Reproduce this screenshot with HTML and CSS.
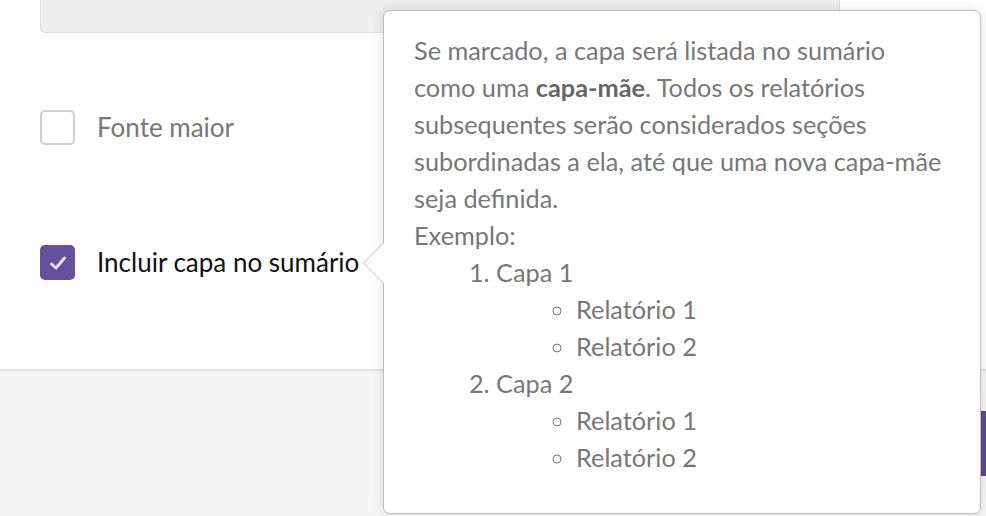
FILE: index.html
```html
<!DOCTYPE html>
<html lang="pt-BR">
    <head>
        <meta charset="UTF-8">
        <title>Opções da capa</title>
        <link rel="stylesheet" href="styles.css">
    </head>
    <body>
        <div class="modal">
            <div class="modal-body">
                <div class="field-box"></div>

                <label class="check-row">
                    <span class="check"></span>
                    <span class="check-label">Fonte maior</span>
                </label>

                <label class="check-row checked">
                    <span class="check">
                        <svg width="18" height="16" viewBox="0 0 18 16">
                            <path d="M2.5 9 L7 13 L15.5 3" fill="none" stroke="#e4e0ee" stroke-width="3" stroke-linecap="round" stroke-linejoin="round"/>
                        </svg>
                    </span>
                    <span class="check-label">Incluir capa no sumário</span>
                </label>
            </div>

            <div class="modal-footer">
                <button class="btn-primary" aria-label="Salvar"></button>
            </div>
        </div>

        <!-- popover do item "Incluir capa no sumário" -->
        <div class="popover">
            <p>Se marcado, a capa será listada no sumário como uma <strong>capa-mãe</strong>. Todos os relatórios subsequentes serão considerados seções subordinadas a ela, até que uma nova capa-mãe seja definida.</p>
            <p>Exemplo:</p>
            <ol>
                <li>Capa 1
                    <ul>
                        <li>Relatório 1</li>
                        <li>Relatório 2</li>
                    </ul>
                </li>
                <li>Capa 2
                    <ul>
                        <li>Relatório 1</li>
                        <li>Relatório 2</li>
                    </ul>
                </li>
            </ol>
        </div>
    </body>
</html>
```

FILE: styles.css
```css
html, body{
    margin: 0;
    height: 100%;
}
body{
    background: #fff;
    font: 26px Lato, "Open Sans", sans-serif;
    overflow: hidden;
    position: relative;
}
.modal{
    display: flex;
    flex-direction: column;
    height: 100%;
}
.modal-body{
    padding: 0 146px 0 40px;
    height: 369px;
    box-sizing: border-box;
}
.field-box{
    background: #eee;
    border: 1px solid #dedede;
    border-top: none;
    border-radius: 0 0 5px 5px;
    height: 32px;
}
.check-row{
    display: flex;
    align-items: center;
    gap: 22px;
    margin-top: 76px;
    cursor: pointer;
}
.check-row + .check-row{
    margin-top: 98px;
}
.check{
    width: 31px;
    height: 31px;
    border: 2px solid #cfcfcf;
    border-radius: 5px;
    display: flex;
    align-items: center;
    justify-content: center;
    background: #fff;
}
.check-label{
    color: #777;
    line-height: 37px;
}
.checked .check{
    background: #65509b;
    border-color: #65509b;
}
.checked .check-label{
    color: #111;
}
.modal-footer{
    flex: 1;
    background: #f5f5f5;
    border-top: 2px solid #e2e2e2;
    display: flex;
    justify-content: flex-end;
    align-items: flex-start;
    padding-top: 40px;
}
.btn-primary{
    background: #5c4a95;
    border: none;
    height: 65px;
    width: 120px;
    margin-right: -112px;
}
.popover{
    position: absolute;
    left: 383px;
    top: 10px;
    width: 536px;
    padding: 21px 30px 37px;
    background: #fff;
    border: 1px solid #bdbdbd;
    border-radius: 7px;
    box-shadow: 0 0 12px rgba(0, 0, 0, .13);
    color: #777;
    font-size: 25.3px;
    line-height: 37px;
}
.popover:before,
.popover:after{
    content: "";
    position: absolute;
    top: 231px;
    border-style: solid;
    border-color: transparent;
}
.popover:before{
    left: -21px;
    border-width: 21px 21px 21px 0;
    border-right-color: #bdbdbd;
}
.popover:after{
    left: -20px;
    border-width: 21px 21px 21px 0;
    border-right-color: #fff;
}
.popover p{
    margin: 0;
}
.popover strong{
    color: #666;
}
.popover ol{
    margin: 0;
    padding-left: 82px;
}
.popover ul{
    margin: 0;
    padding-left: 80px;
    list-style-type: circle;
}
```
